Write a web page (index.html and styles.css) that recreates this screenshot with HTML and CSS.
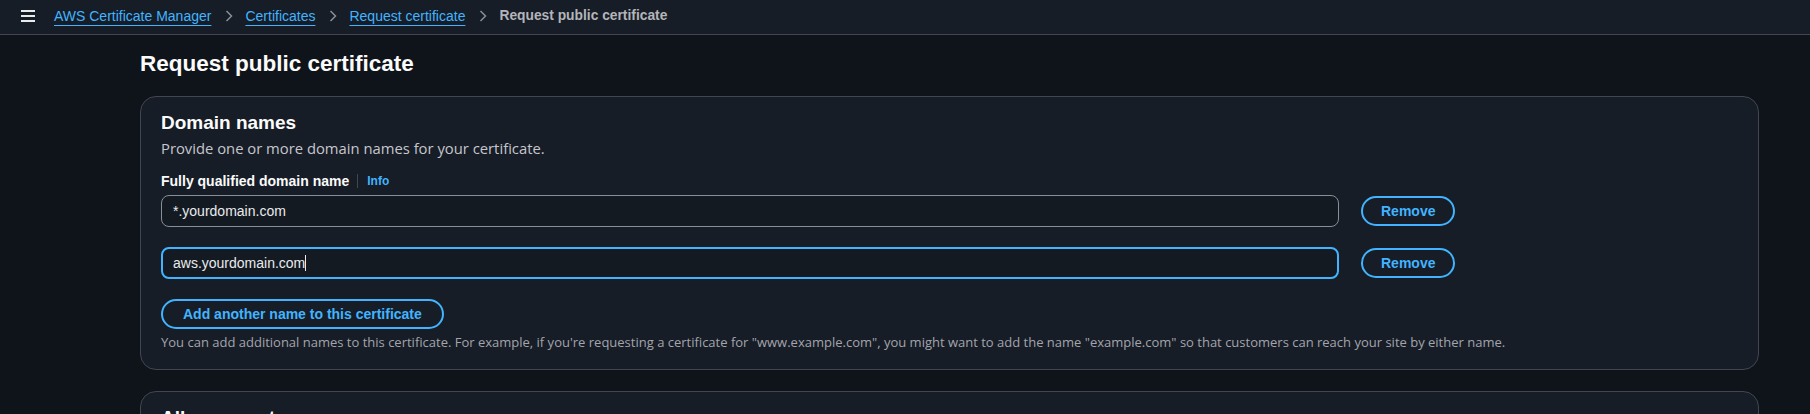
FILE: index.html
```html
<!DOCTYPE html>
<html lang="en">
<head>
    <meta charset="UTF-8">
    <meta name="viewport" content="width=device-width, initial-scale=1.0">
    <title>Request public certificate</title>
    <link rel="stylesheet" href="styles.css">
</head>
<body>

<header class="topbar">
    <button class="menu-toggle" aria-label="Open navigation">
        <svg width="14" height="12" viewBox="0 0 14 12"><path d="M0 1h14M0 6h14M0 11h14" stroke="#e9ebed" stroke-width="2"/></svg>
    </button>
    <nav class="breadcrumbs">
        <a href="#">AWS Certificate Manager</a>
        <span class="crumb-sep"><svg width="8" height="12" viewBox="0 0 8 12"><path d="M1.5 1l5 5-5 5" fill="none" stroke="#8c8c94" stroke-width="1.5"/></svg></span>
        <a href="#">Certificates</a>
        <span class="crumb-sep"><svg width="8" height="12" viewBox="0 0 8 12"><path d="M1.5 1l5 5-5 5" fill="none" stroke="#8c8c94" stroke-width="1.5"/></svg></span>
        <a href="#">Request certificate</a>
        <span class="crumb-sep"><svg width="8" height="12" viewBox="0 0 8 12"><path d="M1.5 1l5 5-5 5" fill="none" stroke="#8c8c94" stroke-width="1.5"/></svg></span>
        <span class="crumb-current">Request public certificate</span>
    </nav>
</header>

<main class="content">
    <h1 class="page-title">Request public certificate</h1>

    <section class="panel">
        <h2 class="panel-title">Domain names</h2>
        <p class="panel-desc">Provide one or more domain names for your certificate.</p>

        <div class="field-label">
            <span>Fully qualified domain name</span>
            <a href="#" class="info-link">Info</a>
        </div>

        <div class="domain-row">
            <div class="text-input">*.yourdomain.com</div>
            <button class="btn">Remove</button>
        </div>
        <div class="domain-row">
            <div class="text-input focused">aws.yourdomain.com<span class="caret"></span></div>
            <button class="btn">Remove</button>
        </div>

        <button class="btn btn-add">Add another name to this certificate</button>
        <p class="help-text">You can add additional names to this certificate. For example, if you're requesting a certificate for "www.example.com", you might want to add the name "example.com" so that customers can reach your site by either name.</p>
    </section>

    <section class="panel">
        <h2 class="panel-title">Allow export</h2>
        <p class="panel-desc">Choose whether the certificate can be exported.</p>
    </section>
</main>

</body>
</html>
```

FILE: styles.css
```css
body {
    margin: 0;
    background: #0f141a;
    color: #dedee3;
    font-family: "Liberation Sans", Arial, sans-serif;
    font-size: 14px;
    line-height: 20px;
    overflow: hidden;
}
.topbar {
    display: flex;
    align-items: center;
    height: 34px;
    padding-left: 21px;
    background: #161d26;
    border-bottom: 1px solid #424650;
}
.menu-toggle {
    display: flex;
    padding: 0;
    border: none;
    background: none;
    margin-right: 19px;
    margin-top: -2px;
}
.breadcrumbs {
    display: flex;
    align-items: center;
    margin-top: -3px;
}
.breadcrumbs a {
    color: #42b4ff;
    text-decoration: underline;
    text-underline-offset: 4px;
}
.crumb-sep {
    display: flex;
    margin: 0 12px 0 14px;
}
.crumb-current {
    color: #b4b4bb;
    font-weight: bold;
    font-size: 13.8px;
}
.content {
    padding: 0 51px 0 140px;
}
.page-title {
    margin: 15px 0 18px;
    font-size: 22.5px;
    line-height: 28px;
    font-weight: bold;
    color: #fbfbfb;
}
.panel {
    background: #161d26;
    border: 1px solid #424650;
    border-radius: 16px;
    padding: 14px 20px 19px;
    margin-bottom: 21px;
}
.panel-title {
    margin: 0;
    font-size: 19px;
    line-height: 24px;
    font-weight: bold;
    color: #fbfbfb;
}
.panel-desc {
    margin: 3px 0 0;
    font-family: "Open Sans", "Liberation Sans", sans-serif;
    font-size: 14.8px;
    color: #c6c6cd;
}
.field-label {
    display: flex;
    align-items: center;
    margin-top: 13px;
    font-weight: bold;
    color: #fbfbfb;
}
.info-link {
    margin-left: 8px;
    padding-left: 9px;
    border-left: 1px solid #424650;
    line-height: 14px;
    font-size: 12px;
    color: #42b4ff;
    text-decoration: none;
}
.domain-row {
    display: flex;
    align-items: center;
    gap: 22px;
    margin-top: 4px;
}
.domain-row + .domain-row {
    margin-top: 20px;
}
.text-input {
    box-sizing: border-box;
    display: flex;
    align-items: center;
    width: 1178px;
    height: 32px;
    padding: 0 11px;
    background: #141a22;
    border: 1px solid #8a8e96;
    border-radius: 8px;
    color: #e9ebed;
}
.text-input.focused {
    padding: 0 10px;
    border: 2px solid #42b4ff;
}
.caret {
    display: inline-block;
    width: 1px;
    height: 16px;
    background: #e9ebed;
}
.btn {
    height: 30px;
    padding: 0 18px;
    border: 2px solid #42b4ff;
    border-radius: 20px;
    background: #161d26;
    color: #42b4ff;
    font-family: inherit;
    font-size: 14px;
    font-weight: bold;
}
.btn-add {
    margin-top: 20px;
    padding: 0 20px;
}
.help-text {
    margin: 5px 0 0;
    font-family: "Open Sans", "Liberation Sans", sans-serif;
    font-size: 13px;
    line-height: 16px;
    color: #a4a4ad;
}
```
